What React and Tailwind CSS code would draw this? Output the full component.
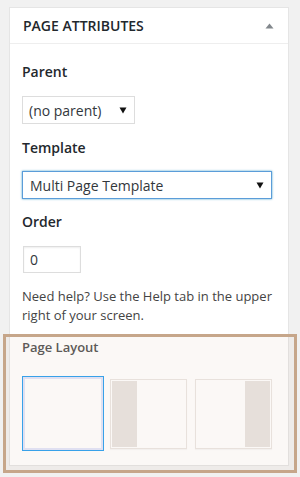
import React from "react";

function Caret() {
  return (
    <svg width="8" height="7" viewBox="0 0 8 7" className="shrink-0">
      <path d="M0.5 0.5 L7.5 0.5 L4 6.5 Z" fill="#111" />
    </svg>
  );
}

export default function App() {
  return (
    <div
      className="relative min-h-[477px] w-[300px] bg-[#f1f1f1] pt-[7px] pl-[9px]"
      style={{ fontFamily: '"Open Sans", "Noto Sans", sans-serif' }}
    >
      <div className="w-[280px] border border-[#e5e5e5] bg-white">
        <div className="flex h-[36px] items-center justify-between border-b border-[#eeeeee] pl-[13px] pr-[14px]">
          <span className="text-[14px] font-semibold uppercase leading-none text-[#23282d]">
            Page Attributes
          </span>
          <svg width="9" height="6" viewBox="0 0 9 6">
            <path d="M0.5 5.5 L4.5 0.5 L8.5 5.5 Z" fill="#82878c" />
          </svg>
        </div>
        <div className="px-[12px] pt-[18px]">
          <div className="text-[14px] font-semibold leading-[20px] text-[#23282d]">Parent</div>
          <div className="mt-[14px] flex h-[28px] w-[113px] items-center justify-between border border-[#dddddd] bg-white pl-[6px] pr-[7px] text-[14px] text-[#32373c]">
            <span>(no parent)</span>
            <Caret />
          </div>
          <div className="mt-[14px] text-[14px] font-semibold leading-[20px] text-[#23282d]">Template</div>
          <div className="mt-[13px] flex h-[28px] w-[250px] items-center justify-between border border-[#5b9dd9] bg-white pl-[7px] pr-[7px] text-[14px] text-[#32373c] shadow-[0_0_2px_rgba(30,140,190,0.8)]">
            <span>Multi Page Template</span>
            <Caret />
          </div>
          <div className="mt-[13px] text-[14px] font-semibold leading-[20px] text-[#23282d]">Order</div>
          <div className="ml-[1px] mt-[14px] flex h-[27px] w-[58px] items-center border border-[#dddddd] bg-white pl-[6px] text-[14px] text-[#32373c] shadow-[inset_0_1px_2px_rgba(0,0,0,0.07)]">
            0
          </div>
          <p className="mt-[14px] text-[13px] leading-[19px] text-[#444444]">
            Need help? Use the Help tab in the upper right of your screen.
          </p>
        </div>
        <div className="mt-[7px] px-[12px] pb-[14px] pt-[5px]">
          <div className="text-[13px] font-semibold leading-[20px] text-[#555555]">Page Layout</div>
          <div className="mt-[19px] flex items-center">
            <div className="h-[75px] w-[82px] border border-[#2ea2f2] shadow-[inset_0_0_0_2px_#e2e6fa]" />
            <div className="ml-[6px] flex h-[70px] w-[77px] border border-[#ebe7e3] p-[1px] shadow-[0_1px_1px_rgba(0,0,0,0.03)]">
              <div className="h-full w-[25px] bg-[#e9e5e1]" />
            </div>
            <div className="ml-[8px] flex h-[70px] w-[77px] justify-end border border-[#ebe7e3] p-[1px] shadow-[0_1px_1px_rgba(0,0,0,0.03)]">
              <div className="h-full w-[25px] bg-[#e9e5e1]" />
            </div>
          </div>
        </div>
      </div>
      <div className="pointer-events-none absolute left-[3px] top-[334px] h-[139px] w-[294px] border-[3px] border-[#c6a68a] bg-[rgba(195,160,125,0.07)]" />
    </div>
  );
}
